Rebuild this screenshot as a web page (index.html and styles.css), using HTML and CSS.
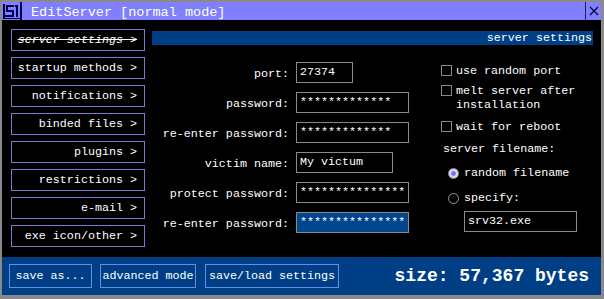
FILE: index.html
```html
<!DOCTYPE html>
<html>
<head>
<meta charset="utf-8">
<link rel="stylesheet" href="styles.css">
</head>
<body>
<div class="window">
  <div class="titlebar">
    <svg class="logo" width="20" height="18" viewBox="0 0 20 18">
      <rect x="1" y="2" width="2" height="14" fill="#000050"/>
      <rect x="4" y="3" width="8" height="2" fill="#000050"/>
      <rect x="4" y="3" width="2" height="6" fill="#000050"/>
      <rect x="4" y="8" width="8" height="2" fill="#000050"/>
      <rect x="10" y="8" width="2" height="7" fill="#000050"/>
      <rect x="3" y="13" width="9" height="2" fill="#000050"/>
      <rect x="14" y="3" width="2" height="12" fill="#000050"/>
      <rect x="13" y="3" width="2" height="2" fill="#000050"/>
      <rect x="1" y="16" width="18" height="1" fill="#000050"/>
      <rect x="18" y="0" width="2" height="18" fill="#000050"/>
    </svg>
    <span class="title">EditServer [normal mode]</span>
    <div class="close">
      <svg width="10" height="10" viewBox="0 0 10 10"><path d="M1 1 L9 9 M9 1 L1 9" stroke="#000040" stroke-width="1.2"/></svg>
    </div>
  </div>
  <div class="main">
    <div class="nav">
      <div class="nav-btn current">server settings &gt;</div>
      <div class="nav-btn">startup methods &gt;</div>
      <div class="nav-btn">notifications &gt;</div>
      <div class="nav-btn">binded files &gt;</div>
      <div class="nav-btn">plugins &gt;</div>
      <div class="nav-btn">restrictions &gt;</div>
      <div class="nav-btn">e-mail &gt;</div>
      <div class="nav-btn">exe icon/other &gt;</div>
    </div>
    <div class="panel">
      <div class="panel-head">server settings</div>
      <div class="panel-body">
        <div class="form">
          <span class="lbl">port:</span><span class="field w-port">27374</span>
          <span class="lbl">password:</span><span class="field w-full">*************</span>
          <span class="lbl">re-enter password:</span><span class="field w-full">*************</span>
          <span class="lbl">victim name:</span><span class="field w-name">My victum</span>
          <span class="lbl">protect password:</span><span class="field w-full">***************</span>
          <span class="lbl">re-enter password:</span><span class="field w-full active">***************</span>
        </div>
        <div class="options">
          <div class="check o1"><span class="box"></span><span>use random port</span></div>
          <div class="check o2"><span class="box"></span><span>melt server after<br>installation</span></div>
          <div class="check o3"><span class="box"></span><span>wait for reboot</span></div>
          <div class="heading">server filename:</div>
          <div class="radio r1"><span class="dot on"></span><span>random filename</span></div>
          <div class="radio r2"><span class="dot"></span><span>specify:</span></div>
          <div class="field w-file">srv32.exe</div>
        </div>
      </div>
    </div>
  </div>
  <div class="bottombar">
    <div class="bbtn w-save">save as...</div>
    <div class="bbtn w-adv">advanced mode</div>
    <div class="bbtn w-load">save/load settings</div>
    <div class="size">size: 57,367 bytes</div>
  </div>
</div>
</body>
</html>
```
FILE: styles.css
```css
html, body {
  margin: 0;
  padding: 0;
  background: #848484;
}
.window {
  width: 604px;
  height: 299px;
  box-sizing: border-box;
  border-style: solid;
  border-color: #8a8a8a;
  border-width: 2px 3px 4px 2px;
  background: #000;
  display: flex;
  flex-direction: column;
  font-family: "Courier New", "Nimbus Mono PS", "Nimbus Mono L", "FreeMono", "Liberation Mono", monospace;
  font-size: 11.7px;
  color: #fff;
}
.titlebar {
  height: 18px;
  background: #8080ff;
  display: flex;
  align-items: center;
  flex: none;
}
.logo {
  display: block;
  flex: none;
}
.title {
  font-size: 13.5px;
  margin-left: 9px;
  padding-top: 2px;
  flex: 1;
  letter-spacing: 0;
}
.close {
  width: 16px;
  height: 18px;
  box-sizing: border-box;
  border-left: 1px solid #202050;
  display: flex;
  align-items: center;
  justify-content: center;
}
.close svg { display: block; }
.main {
  flex: 1;
  display: flex;
  padding: 9px 0 0 9px;
}
.nav {
  width: 134px;
  display: flex;
  flex-direction: column;
  gap: 6px;
  flex: none;
}
.nav-btn {
  height: 22px;
  box-sizing: border-box;
  border: 1px solid #7878d0;
  text-align: right;
  padding-right: 7px;
  line-height: 20px;
  white-space: pre;
}
.nav-btn.current {
  font-style: italic;
  text-decoration: line-through;
}
.panel {
  margin-left: 7px;
  width: 441px;
  padding-top: 2px;
}
.panel-head {
  height: 14px;
  background: #003f86;
  text-align: right;
  line-height: 14px;
  padding-right: 1px;
}
.panel-body {
  display: flex;
  padding-top: 17px;
}
.form {
  display: grid;
  grid-template-columns: 137px auto;
  grid-auto-rows: 21px;
  column-gap: 7px;
  row-gap: 9px;
  align-items: center;
  justify-items: start;
}
.lbl {
  justify-self: end;
  padding-top: 2px;
  white-space: pre;
}
.field {
  height: 21px;
  box-sizing: border-box;
  border: 1px solid #8a8a8a;
  padding-left: 3px;
  line-height: 19px;
  white-space: pre;
  overflow: hidden;
}
.w-port { width: 57px; }
.w-full { width: 113px; }
.w-name { width: 97px; }
.w-file { width: 113px; margin-left: 23px; margin-top: 6px; }
.field.active { background: #00468e; }
.options {
  margin-left: 32px;
  display: flex;
  flex-direction: column;
  line-height: 14px;
}
.check, .radio {
  display: flex;
  align-items: flex-start;
}
.box {
  width: 11px;
  height: 11px;
  box-sizing: border-box;
  border: 1px solid #8a8a8a;
  margin-top: 1px;
  margin-right: 4px;
  flex: none;
}
.o1 { margin-top: 2px; }
.o2 { margin-top: 6px; }
.o3 { margin-top: 8px; }
.heading { margin-top: 8px; margin-left: 2px; }
.radio { margin-left: 7px; }
.r1 { margin-top: 10px; }
.r2 { margin-top: 11px; }
.dot {
  width: 11px;
  height: 11px;
  box-sizing: border-box;
  border-radius: 50%;
  border: 1px solid #9a9a9a;
  margin-top: 2px;
  margin-right: 5px;
  flex: none;
}
.dot.on {
  background: radial-gradient(circle, #7070ff 0, #7070ff 2px, #d8d8e8 2.5px);
}
.bottombar {
  height: 38px;
  flex: none;
  background: #003f86;
  display: flex;
  align-items: center;
  padding-left: 7px;
  padding-right: 12px;
}
.bbtn {
  height: 24px;
  box-sizing: border-box;
  border: 1px solid #5f8fea;
  line-height: 22px;
  text-align: center;
  margin-right: 8px;
  white-space: pre;
}
.w-save { width: 83px; }
.w-adv { width: 96px; }
.w-load { width: 134px; margin-left: 1px; }
.size {
  margin-left: auto;
  font-size: 18px;
  font-weight: bold;
}
```
